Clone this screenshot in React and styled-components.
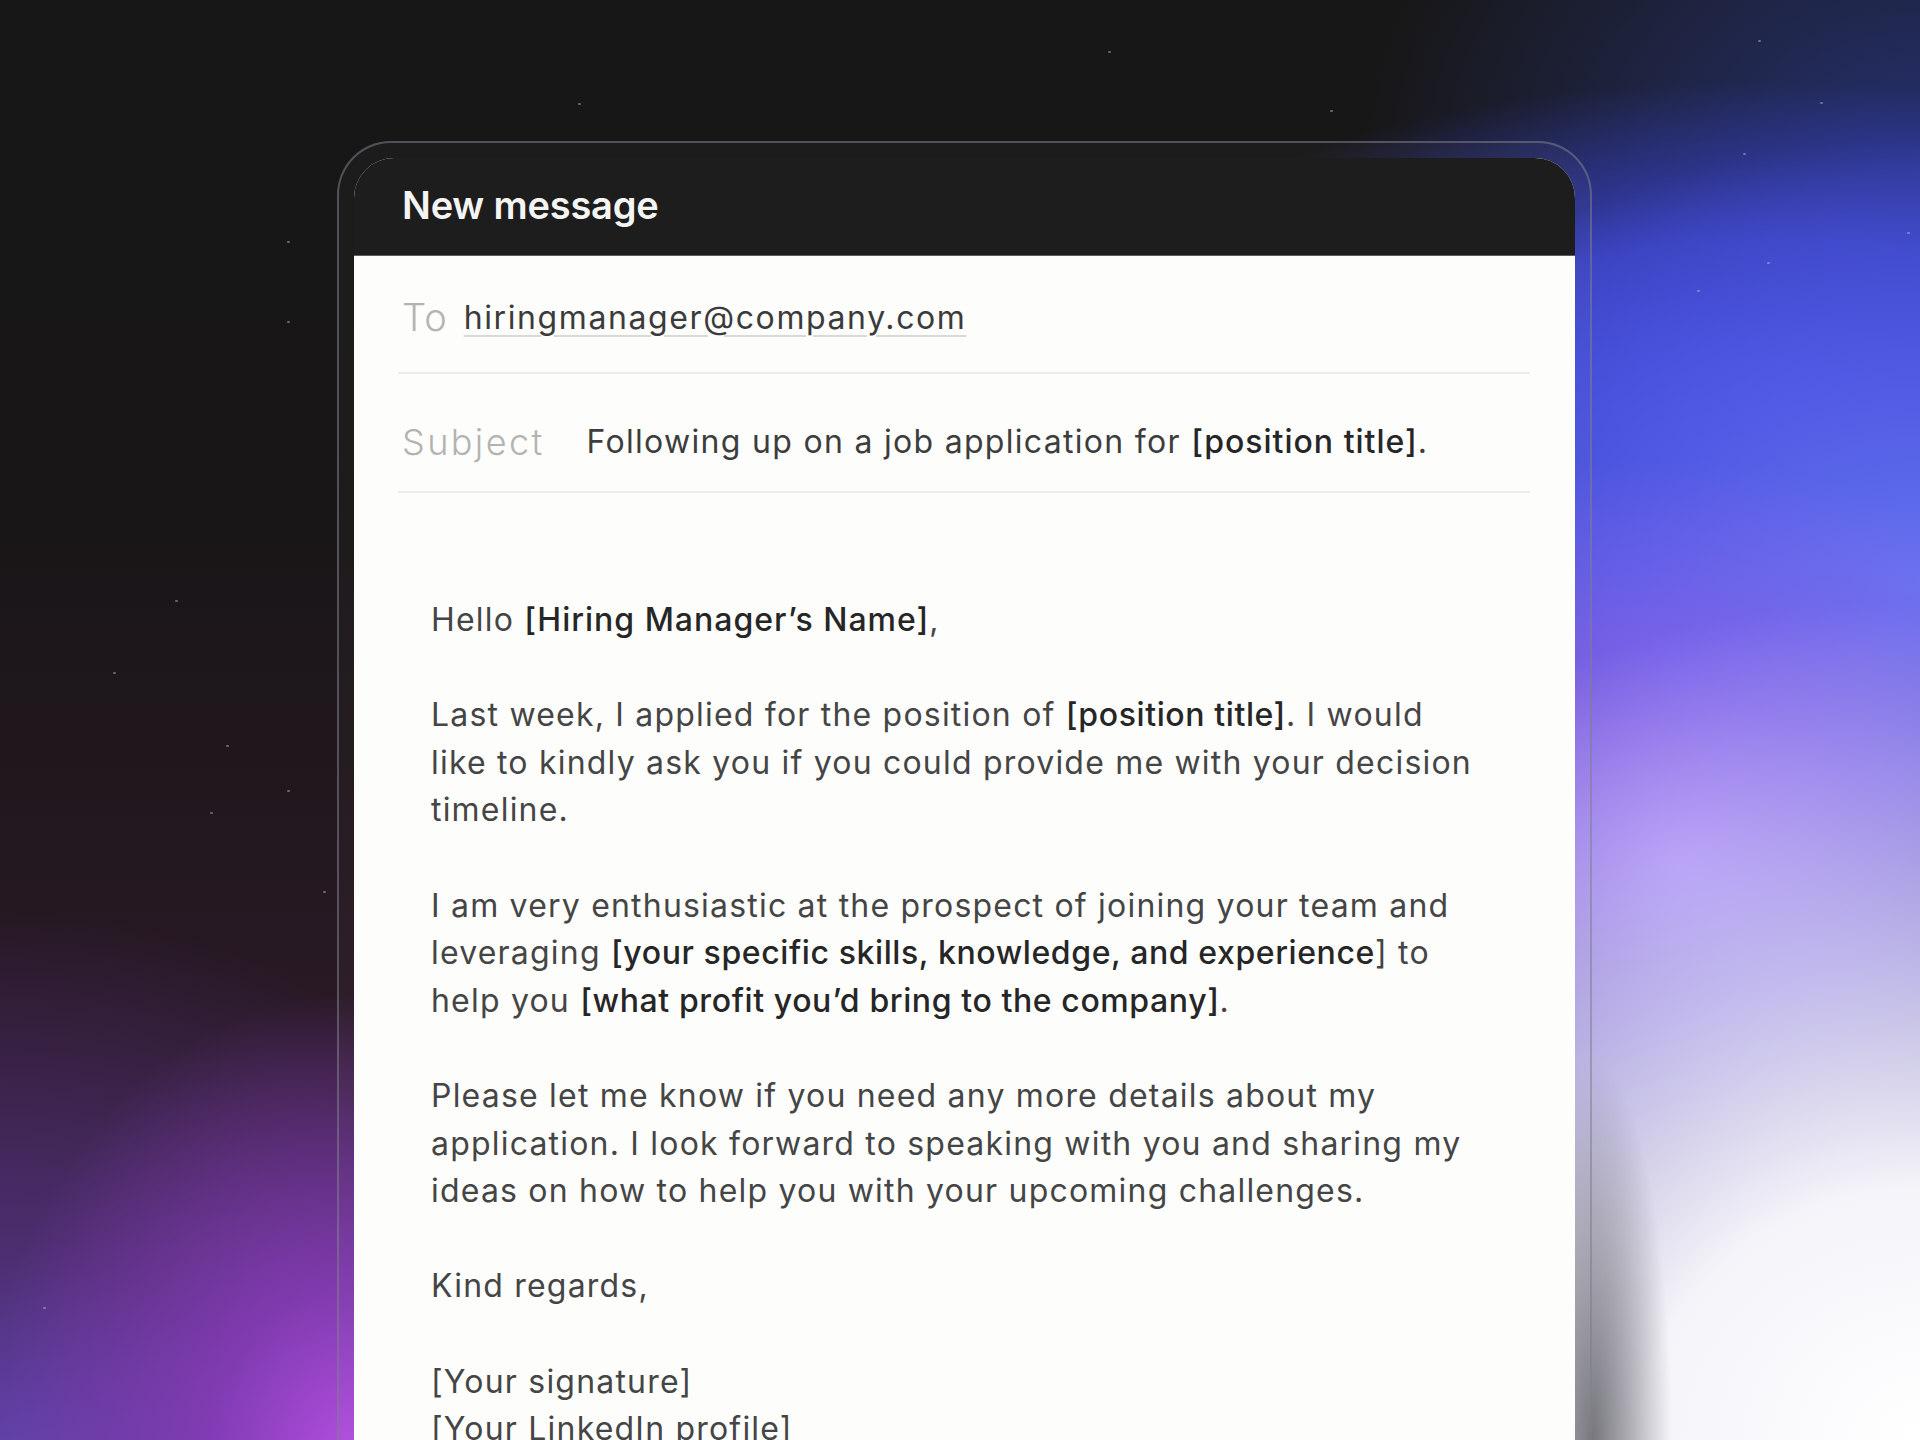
import React from "react";
import styled, { createGlobalStyle } from "styled-components";

const Global = createGlobalStyle`
  html, body { margin: 0; padding: 0; background: #171717; }
  body { font-family: Inter, "Noto Sans", sans-serif; }
  * { box-sizing: border-box; }
`;

const Page = styled.div`
  position: relative;
  width: 1920px;
  height: 1440px;
  overflow: hidden;
  padding: 141px 0 0 337px;
  background:
    radial-gradient(ellipse 80px 380px at 1592px 1440px, rgba(112,112,118,0.95) 0%, rgba(125,125,132,0.55) 50%, rgba(140,140,150,0) 100%),
    radial-gradient(ellipse 920px 840px at 1920px 1440px, #ffffff 0%, rgba(248,248,253,0.98) 30%, rgba(215,215,250,0.8) 55%, rgba(195,190,245,0) 100%),
    radial-gradient(ellipse 480px 400px at 1680px 860px, rgba(160,120,245,1) 0%, rgba(145,105,240,0.75) 40%, rgba(120,90,230,0) 100%),
    radial-gradient(ellipse 620px 440px at 1920px 580px, rgba(100,115,240,1) 0%, rgba(85,95,232,0.85) 45%, rgba(70,80,225,0) 100%),
    radial-gradient(ellipse 720px 320px at 1760px 400px, rgba(60,70,215,1) 0%, rgba(60,70,215,0.8) 50%, rgba(60,70,215,0) 100%),
    radial-gradient(ellipse 260px 360px at 1620px 600px, rgba(75,50,190,0.9) 0%, rgba(75,50,190,0) 100%),
    radial-gradient(ellipse 380px 480px at 360px 1470px, rgba(182,80,228,1) 0%, rgba(150,65,205,0.7) 40%, rgba(110,50,160,0) 100%),
    radial-gradient(ellipse 620px 560px at 0px 1470px, rgba(95,68,172,1) 0%, rgba(85,50,130,0.75) 40%, rgba(60,35,80,0) 100%),
    radial-gradient(ellipse 560px 420px at 1920px 160px, rgba(38,50,115,0.95) 0%, rgba(30,35,70,0) 100%),
    linear-gradient(180deg, #171717 0%, #181617 35%, #21171d 55%, #2b1a28 75%, #3a2448 100%);
`;

const Star = styled.span`
  position: absolute;
  width: 3px;
  height: 2px;
  border-radius: 1px;
  background: rgba(200, 200, 220, 0.45);
`;

const Frame = styled.div`
  width: 1255px;
  height: 1340px;
  padding: 15px 15px 0 15px;
  border: 2px solid rgba(125, 125, 140, 0.55);
  border-radius: 54px 54px 0 0;
  background: rgba(255, 255, 255, 0.025);
`;

const Card = styled.div`
  width: 1221px;
  height: 100%;
  border-radius: 40px 40px 0 0;
  overflow: hidden;
  background: #fdfdfc;
  display: flex;
  flex-direction: column;
`;

const Header = styled.div`
  height: 98px;
  flex: none;
  display: flex;
  align-items: center;
  padding: 0 0 4px 48px;
  background: #1d1d1d;
  border-bottom: 1px solid #5c5c5c;
`;

const Title = styled.h1`
  margin: 0;
  font-family: Inter, sans-serif;
  font-weight: 600;
  font-size: 38px;
  letter-spacing: -0.2px;
  color: #f4f4f2;
`;

const Fields = styled.div`
  padding: 0 45px 0 44px;
`;

const FieldRow = styled.div`
  height: ${(p) => p.$height}px;
  display: flex;
  align-items: center;
  gap: ${(p) => p.$gap}px;
  padding: ${(p) => p.$pt}px 0 0 4px;
  border-bottom: 2px solid #ececea;
`;

const Label = styled.span`
  font-family: Inter, sans-serif;
  font-weight: 300;
  font-size: ${(p) => p.$size}px;
  letter-spacing: ${(p) => p.$ls}px;
  color: #b3b3b1;
`;

const Email = styled.span`
  font-family: Inter, sans-serif;
  font-size: 32px;
  letter-spacing: 1.6px;
  color: #3b3b3b;
  text-decoration: underline;
  text-decoration-color: #d9d9d6;
  text-decoration-thickness: 2px;
  text-underline-offset: 6px;
`;

const SubjectText = styled.span`
  font-family: Inter, sans-serif;
  font-size: 32px;
  letter-spacing: 1.3px;
  color: #3d3d3d;
`;

const Strong = styled.span`
  font-weight: 500;
  letter-spacing: ${(p) => p.$ls ?? 0.6}px;
  color: #262626;
`;

const Body = styled.div`
  padding: 103px 40px 0 77px;
  display: flex;
  flex-direction: column;
  gap: 47.6px;
`;

const Para = styled.p`
  margin: 0;
  font-family: Inter, sans-serif;
  font-size: 32px;
  line-height: 47.6px;
  letter-spacing: 1.2px;
  color: #454545;
  white-space: nowrap;
`;

const stars = [
  [287, 241], [287, 321], [175, 600], [113, 672], [226, 745], [287, 790],
  [210, 812], [323, 891], [43, 1307], [1108, 51], [578, 103], [1758, 40],
  [1820, 102], [1743, 153], [1767, 262], [1697, 290], [1907, 232], [1330, 110]
];

export default function App() {
  return (
    <>
      <Global />
      <Page>
        {stars.map(([x, y], i) => (
          <Star key={i} style={{ left: x, top: y }} />
        ))}
        <Frame>
          <Card>
            <Header>
              <Title>New message</Title>
            </Header>
            <Fields>
              <FieldRow $height={118} $gap={16} $pt={6}>
                <Label $size={38} $ls={1}>To</Label>
                <Email>hiringmanager@company.com</Email>
              </FieldRow>
              <FieldRow $height={119} $gap={42} $pt={18}>
                <Label $size={36} $ls={2.4}>Subject</Label>
                <SubjectText>
                  Following up on a job application for <Strong $ls={1}>[position title]</Strong>.
                </SubjectText>
              </FieldRow>
            </Fields>
            <Body>
              <Para>
                Hello <Strong $ls={1}>[Hiring Manager’s Name]</Strong>,
              </Para>
              <Para>
                Last week, I applied for the position of <Strong>[position title]</Strong>. I would
                <br />
                like to kindly ask you if you could provide me with your decision
                <br />
                timeline.
              </Para>
              <Para>
                I am very enthusiastic at the prospect of joining your team and
                <br />
                leveraging <Strong>[your specific skills, knowledge, and experience</Strong>] to
                <br />
                help you <Strong>[what profit you’d bring to the company]</Strong>.
              </Para>
              <Para>
                Please let me know if you need any more details about my
                <br />
                application. I look forward to speaking with you and sharing my
                <br />
                ideas on how to help you with your upcoming challenges.
              </Para>
              <Para>Kind regards,</Para>
              <Para>
                [Your signature]
                <br />
                [Your LinkedIn profile]
              </Para>
            </Body>
          </Card>
        </Frame>
      </Page>
    </>
  );
}
